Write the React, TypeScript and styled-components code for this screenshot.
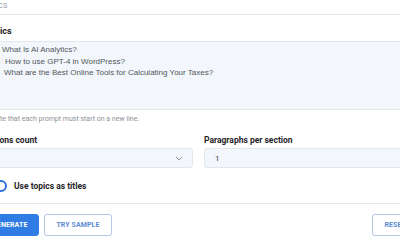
import styled, { createGlobalStyle } from "styled-components";

const GlobalStyle = createGlobalStyle`
  html, body {
    margin: 0;
    padding: 0;
    background: #ffffff;
    overflow: hidden;
  }
  body {
    font-family: Roboto, "Liberation Sans", Arial, sans-serif;
  }
`;

const Page = styled.div`
  width: 438px;
  margin-left: -20px;
  display: flex;
  flex-direction: column;
`;

const TabBar = styled.div`
  height: 15px;
  box-sizing: border-box;
  border-bottom: 1px solid #e6e9ed;
  font-size: 9px;
  line-height: 11px;
  color: #a0a5ab;
  padding-left: 1px;
`;

const FieldLabel = styled.div`
  font-size: 8.5px;
  font-weight: 700;
  line-height: 10px;
  color: #1f2428;
`;

const TopicsHead = styled(FieldLabel)`
  font-size: 9px;
  padding: 11px 0 5px 5px;
  border-bottom: 1px solid #e3e7ec;
`;

const Prompts = styled.div`
  height: 68px;
  background: #f3f6fa;
  border-bottom: 1px solid #e2e6eb;
  font-family: "Liberation Sans", Arial, sans-serif;
  font-size: 8px;
  line-height: 11.5px;
  color: #50565c;
  padding-top: 2px;
  box-sizing: border-box;
  white-space: pre;
`;

const PromptLine = styled.div<{ $indent: number }>`
  padding-left: ${({ $indent }) => $indent}px;
`;

const Hint = styled.div`
  margin-top: 4px;
  font-size: 7px;
  line-height: 10px;
  color: #8c9197;
  padding-left: 11px;
`;

const FieldGrid = styled.div`
  margin-top: 11px;
  display: grid;
  grid-template-columns: 213px 1fr;
  column-gap: 11px;
`;

const Field = styled.div`
  display: flex;
  flex-direction: column;
  gap: 3px;
`;

const SelectBox = styled.div`
  height: 20px;
  box-sizing: border-box;
  background: #f3f6fa;
  border: 1px solid #e3e8ee;
  border-radius: 3px;
  display: flex;
  align-items: center;
  justify-content: space-between;
  padding: 0 9px 0 10px;
  font-size: 8px;
  color: #3a3f44;
`;

const ToggleRow = styled.label`
  margin-top: 10px;
  height: 16px;
  display: flex;
  align-items: center;
  gap: 7px;
  padding-left: 15px;
  font-size: 8.5px;
  font-weight: 700;
  color: #1f2428;
`;

const Knob = styled.span`
  width: 12px;
  height: 12px;
  box-sizing: border-box;
  border-radius: 50%;
  border: 2px solid #2f74de;
  background: #fff;
`;

const Divider = styled.div`
  margin-top: 9px;
  border-top: 1px solid #e6e9ed;
`;

const Actions = styled.div`
  margin-top: 10px;
  display: flex;
  gap: 5px;
`;

const Button = styled.button<{ $primary?: boolean; $push?: boolean }>`
  height: 22px;
  box-sizing: border-box;
  padding: 0 11px;
  border-radius: 3px;
  font-family: Roboto, "Liberation Sans", Arial, sans-serif;
  font-size: 7px;
  font-weight: 700;
  letter-spacing: 0.1px;
  margin-left: ${({ $push }) => ($push ? "auto" : "0")};
  background: ${({ $primary }) => ($primary ? "#2e7ce4" : "#ffffff")};
  color: ${({ $primary }) => ($primary ? "#ffffff" : "#5b8bd3")};
  border: 1px solid ${({ $primary }) => ($primary ? "#2e7ce4" : "#b3c8e6")};
`;

const prompts = [
  { text: "What Is AI Analytics?", indent: 22 },
  { text: "How to use GPT-4 in WordPress?", indent: 25 },
  { text: "What are the Best Online Tools for Calculating Your Taxes?", indent: 24 },
];

const Chevron = () => (
  <svg width="8" height="5" viewBox="0 0 8 5" fill="none">
    <path d="M1 1l3 3 3-3" stroke="#8f959c" strokeWidth="1" />
  </svg>
);

export default function App() {
  return (
    <>
      <GlobalStyle />
      <Page>
        <TabBar>Topics</TabBar>
        <TopicsHead>Topics</TopicsHead>
        <Prompts>
          {prompts.map((p) => (
            <PromptLine key={p.text} $indent={p.indent}>
              {p.text}
            </PromptLine>
          ))}
        </Prompts>
        <Hint>Note that each prompt must start on a new line.</Hint>
        <FieldGrid>
          <Field>
            <FieldLabel>Sections count</FieldLabel>
            <SelectBox>
              <span />
              <Chevron />
            </SelectBox>
          </Field>
          <Field>
            <FieldLabel>Paragraphs per section</FieldLabel>
            <SelectBox>1</SelectBox>
          </Field>
        </FieldGrid>
        <ToggleRow>
          <Knob />
          Use topics as titles
        </ToggleRow>
        <Divider />
        <Actions>
          <Button $primary>GENERATE</Button>
          <Button>TRY SAMPLE</Button>
          <Button $push>RESET</Button>
        </Actions>
      </Page>
    </>
  );
}
